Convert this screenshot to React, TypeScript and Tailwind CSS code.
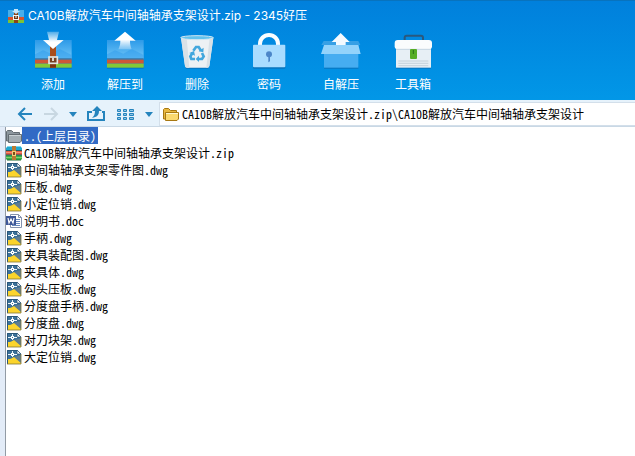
import { useState } from 'react';
import type { ReactNode } from 'react';

type FileKind = 'folder' | 'zip' | 'dwg' | 'doc';

interface FileEntry {
  name: string;
  kind: FileKind;
}

const archiveName = 'CA10B解放汽车中间轴轴承支架设计';

const files: FileEntry[] = [
  { name: '..(上层目录)', kind: 'folder' },
  { name: `${archiveName}.zip`, kind: 'zip' },
  { name: '中间轴轴承支架零件图.dwg', kind: 'dwg' },
  { name: '压板.dwg', kind: 'dwg' },
  { name: '小定位销.dwg', kind: 'dwg' },
  { name: '说明书.doc', kind: 'doc' },
  { name: '手柄.dwg', kind: 'dwg' },
  { name: '夹具装配图.dwg', kind: 'dwg' },
  { name: '夹具体.dwg', kind: 'dwg' },
  { name: '勾头压板.dwg', kind: 'dwg' },
  { name: '分度盘手柄.dwg', kind: 'dwg' },
  { name: '分度盘.dwg', kind: 'dwg' },
  { name: '对刀块架.dwg', kind: 'dwg' },
  { name: '大定位销.dwg', kind: 'dwg' },
];

// Toolbar drawings share one 120x114 canvas
function ToolIcon({ children }: { children: ReactNode }) {
  return (
    <svg viewBox="0 0 120 114" className="h-[38px] w-10" aria-hidden="true">
      {children}
    </svg>
  );
}

// The striped box used by "add" and "extract"
function StripedBox() {
  return (
    <>
      <rect x="6" y="108" width="110" height="5" fill="#0874bd" />
      <rect x="6" y="27" width="110" height="58" fill="url(#boxSky)" />
      <path d="M6 70 30 58 55 68 80 54 116 72V85H6z" fill="#2f9ceb" opacity=".5" />
      <rect x="6" y="82" width="110" height="4" fill="#386f9c" />
      <rect x="6" y="86" width="110" height="12" fill="#cf5637" />
      <rect x="6" y="98" width="110" height="12" fill="#83c936" />
    </>
  );
}

function AddIcon() {
  return (
    <ToolIcon>
      <StripedBox />
      <rect x="51" y="40" width="18" height="70" fill="#a94d1c" />
      <path d="M51 87h18v23H51z" fill="#80340f" />
      <rect x="48" y="78" width="25" height="19" fill="#77401f" stroke="#e3e6e5" strokeWidth="5" />
      <path d="M60 80v10" stroke="#f5f5f5" strokeWidth="5" />
      <path d="M42 2h36l-6 25h20L60 54 30 27h18z" fill="url(#arrowDown)" />
    </ToolIcon>
  );
}

function ExtractIcon() {
  return (
    <ToolIcon>
      <StripedBox />
      <path d="M60 2 92 29H75c0 12 2 18 5 26H40c4-8 6-14 6-26H28z" fill="url(#arrowUp)" />
    </ToolIcon>
  );
}

function DeleteIcon() {
  return (
    <ToolIcon>
      <path d="M24 107h72l-3 6H27z" fill="#0873bc" />
      <path d="M12 20h97l-12 85q-1 5-6 5H30q-5 0-6-5z" fill="#edf1f4" />
      <path d="M12 20h17l8 90h-7q-5 0-6-5zM109 20H98l-10 90h3q5 0 6-5z" fill="#d9e1e7" />
      <ellipse cx="60" cy="20" rx="49" ry="6" fill="#63c3ee" stroke="#d3e7f2" strokeWidth="3" />
      <g fill="none" stroke="#42a7dd" strokeWidth="8">
        <path d="m49 59 8-11h8l7 11" />
        <path d="m75 66 5 10-5 8H63" />
        <path d="M54 84H43l-3-8 7-11" />
      </g>
      <g fill="#42a7dd">
        <path d="m65 61 14 3 1-14z" />
        <path d="m66 74-10 10 10 9z" />
        <path d="m37 66 14-6 3 14z" />
      </g>
    </ToolIcon>
  );
}

function PasswordIcon() {
  return (
    <ToolIcon>
      <path d="M33 44V38a27 26 0 0 1 54 0v6" fill="none" stroke="#fafdff" strokeWidth="12" />
      <rect x="12" y="43" width="97" height="70" rx="3" fill="#0874bd" />
      <rect x="12" y="41" width="97" height="68" rx="3" fill="#a9dcff" />
      <circle cx="60" cy="70" r="9" fill="#4c86c9" />
      <path d="M58 72h5v19l-5 3z" fill="#4c86c9" />
    </ToolIcon>
  );
}

function SelfExtractIcon() {
  return (
    <ToolIcon>
      <path d="M8 30h104l6 12H1z" fill="#4faae7" opacity=".7" />
      <path d="M59 6 86 33H74v13H45V33H32z" fill="#f4faff" />
      <rect x="9" y="106" width="103" height="7" fill="#0874bd" />
      <rect x="9" y="42" width="103" height="68" fill="#46adf1" />
      <path d="M9 42h103l7 27H0z" fill="#93d3fb" />
    </ToolIcon>
  );
}

function ToolboxIcon() {
  return (
    <ToolIcon>
      <path d="M35 30V20q0-6 6-6h43q6 0 6 6v10" fill="none" stroke="#2b587d" strokeWidth="6" />
      <rect x="9" y="106" width="105" height="7" fill="#0874bd" />
      <rect x="9" y="50" width="105" height="60" fill="#e7eff5" />
      <rect x="5" y="27" width="112" height="28" rx="9" fill="#fafcfd" />
      <path d="M9 55h105" stroke="#c4d5e1" strokeWidth="3" />
      <path d="M16 90h90M16 97h90M16 104h90" stroke="#b4c2cd" strokeWidth="2" />
      <rect x="51" y="54" width="21" height="30" rx="3" fill="#55ad27" />
      <path d="M61 57v12" stroke="#27701a" strokeWidth="3" />
    </ToolIcon>
  );
}

// Small striped box in the title bar
function AppIcon() {
  return (
    <svg viewBox="0 0 16 16" className="size-4" aria-hidden="true">
      <rect y="2" width="16" height="8" fill="#48aeea" />
      <rect y="9" width="16" height="3" fill="#d9532c" />
      <rect y="12" width="16" height="3" fill="#7fc236" />
      <rect x="6" y="3" width="4" height="12" fill="#8d4318" />
      <path d="M6 1h4v2h2L8 6 4 3h2z" fill="#c5e6fa" />
      <rect x="5.500" y="7.500" width="5" height="4" fill="#6b3515" stroke="#f4f4f4" />
      <path d="M8 8v2" stroke="#fff" />
    </svg>
  );
}

function ArchiveIcon() {
  return (
    <svg viewBox="0 0 16 16" className="size-4" aria-hidden="true">
      <path d="M2 1h12l2 2v3H0V3z" fill="#20a7cf" />
      <path d="M2 1h12l1 1H1z" fill="#7bd8ee" />
      <rect y="6" width="16" height="4" fill="#e25a41" />
      <path d="M0 10h16v4l-1 1H1l-1-1z" fill="#3cae48" />
      <path d="M0 5.500h16M0 10h16" stroke="#1d5c66" />
      <path d="M0 7.500h16" stroke="#f58e72" />
      <path d="M0 12.500h16" stroke="#80d36e" />
      <path d="M1 15h14" stroke="#1e6b35" />
      <rect x="6" y="1" width="4" height="14" fill="#b97a32" />
      <rect x="6.500" y="6.500" width="3" height="4" fill="#7b4a1b" stroke="#f0d27a" />
    </svg>
  );
}

function FolderIcon({ gray }: { gray?: boolean }) {
  const line = gray ? '#636b71' : '#a77812';
  return (
    <svg viewBox="0 0 16 16" className="size-4" aria-hidden="true">
      <path d="M.5 13V3.500l1-1h4l2 2h6V13z" fill={gray ? '#8c969d' : '#e9b840'} stroke={line} />
      <path d="M2.500 14.500v-8h13V13l-1.500 1.500z" fill={gray ? '#a4adb2' : '#fbd96f'} stroke={line} />
      <path d="M3 7.500h12" stroke={gray ? '#c9d0d4' : '#fff8cf'} />
    </svg>
  );
}

function DwgIcon() {
  return (
    <svg viewBox="0 0 16 16" className="size-4" aria-hidden="true">
      <path d="M1 1h10l4 4v10H1z" fill="#3c7199" />
      <path d="M8 8 15 6v8z" fill="#5f7c91" />
      <path d="M1 10c3 .3 5-.5 7-2l7 6v1H1z" fill="#fbd42c" />
      <path d="M2 5.500h3M8 5.500h3M6.500 2v2M6.500 7v1" stroke="#eaf3f8" />
      <rect x="5.500" y="4.500" width="2" height="2" fill="#3c7199" stroke="#fff" />
      <path d="M11 1v4h4z" fill="#fff" stroke="#2c5678" strokeWidth=".8" />
      <path d="M1.500 15V1.500H11" fill="none" stroke="#28567a" />
      <path d="M1 15h14V5" fill="none" stroke="#847636" strokeWidth=".8" />
    </svg>
  );
}

function DocIcon() {
  return (
    <svg viewBox="0 0 16 16" className="size-4" aria-hidden="true">
      <path d="M4.500 1.500h8l3 3v10h-11z" fill="#fff" stroke="#8492ad" />
      <path d="M10 6.500h4M10 8.500h4M10 10.500h4M6 12.500h8" stroke="#6687bd" />
      <path d="M12.500 1.500v3h3" fill="none" stroke="#8492ad" />
      <rect x="0" y="3" width="10" height="9" fill="#3d5797" />
      <path d="m2 5 1 5 2-4 2 4 1-5" fill="none" stroke="#fff" strokeWidth="1.200" />
    </svg>
  );
}

function FileIcon({ kind }: { kind: FileKind }) {
  if (kind === 'folder') return <FolderIcon gray />;
  if (kind === 'zip') return <ArchiveIcon />;
  if (kind === 'doc') return <DocIcon />;
  return <DwgIcon />;
}

function Caret() {
  return (
    <svg viewBox="0 0 8 5" className="h-[5px] w-2" aria-hidden="true">
      <path d="M0 0h8L4 5z" fill="#2484bd" />
    </svg>
  );
}

const tools = [
  { label: '添加', icon: <AddIcon /> },
  { label: '解压到', icon: <ExtractIcon /> },
  { label: '删除', icon: <DeleteIcon /> },
  { label: '密码', icon: <PasswordIcon /> },
  { label: '自解压', icon: <SelfExtractIcon /> },
  { label: '工具箱', icon: <ToolboxIcon /> },
];

export default function App() {
  const [selected, setSelected] = useState(0);
  const [path, setPath] = useState(`${archiveName}.zip\\${archiveName}`);

  return (
    <div className="flex min-h-screen flex-col bg-white font-['Noto_Sans_CJK_SC',sans-serif] text-xs text-black">
      {/* Shared gradients */}
      <svg className="absolute size-0" aria-hidden="true">
        <defs>
          <linearGradient id="boxSky" x2="0" y2="1">
            <stop stopColor="#2d9ae8" />
            <stop offset="1" stopColor="#70c6f8" />
          </linearGradient>
          <linearGradient id="arrowDown" x2="0" y2="1">
            <stop stopColor="#fff" stopOpacity=".3" />
            <stop offset=".6" stopColor="#fff" />
          </linearGradient>
          <linearGradient id="arrowUp" x2="0" y2="1">
            <stop offset=".45" stopColor="#fff" />
            <stop offset="1" stopColor="#fff" stopOpacity=".25" />
          </linearGradient>
        </defs>
      </svg>

      {/* Title bar and main toolbar */}
      <header className="border-t border-[#0873be] bg-linear-to-b from-[#0180dc] to-[#0297e7] pb-[6px] text-white">
        <div className="flex h-[30px] items-center gap-1 pl-2">
          <AppIcon />
          <h1 className="font-[Inter,'Noto_Sans_CJK_SC',sans-serif]">{archiveName}.zip - 2345好压</h1>
        </div>
        <div className="flex pl-[17px]">
          {tools.map((tool) => (
            <button key={tool.label} className="flex w-[72px] flex-col items-center gap-[5px]">
              {tool.icon}
              <span className="leading-5">{tool.label}</span>
            </button>
          ))}
        </div>
      </header>

      {/* Navigation bar */}
      <nav className="flex h-[27px] items-center border-b border-[#c9d8e5] bg-[#e6f2fb] pt-[2px]">
        <div className="flex w-[159px] shrink-0 items-center pl-[17px]">
          <button aria-label="后退" className="w-[26px]">
            <svg viewBox="0 0 16 14" className="h-[14px] w-4" fill="none" stroke="#2484bd" strokeWidth="2">
              <path d="M15 7H2M8 1 2 7l6 6" />
            </svg>
          </button>
          <button aria-label="前进" className="w-[26px]">
            <svg viewBox="0 0 16 14" className="h-[14px] w-4" fill="none" stroke="#c8d7e1" strokeWidth="2">
              <path d="M1 7h13M8 1l6 6-6 6" />
            </svg>
          </button>
          <button aria-label="历史记录" className="w-[17px]">
            <Caret />
          </button>
          <button aria-label="向上" className="w-[30px]">
            <svg viewBox="0 0 20 16" className="h-4 w-5">
              <path d="M6 6H2v8h16V6h-2" fill="none" stroke="#2484bd" strokeWidth="2" />
              <path d="M11 0l5 5h-3c0 4-2 6-7 7 2-2 3-4 3-7H6z" fill="#2484bd" />
            </svg>
          </button>
          <button aria-label="视图" className="w-[29px]">
            <svg viewBox="0 0 19 13" className="h-[13px] w-[19px]">
              <g fill="#8fc3e3" stroke="#2484bd">
                <path d="M1.500 1.500h3v2h-3zM1.500 5.500h3v2h-3zM1.500 9.500h3v2h-3z" />
                <path d="M7.500 1.500h3v2h-3zM7.500 5.500h3v2h-3zM7.500 9.500h3v2h-3z" />
                <path d="M13.500 1.500h4v2h-4zM13.500 5.500h4v2h-4zM13.500 9.500h4v2h-4z" />
              </g>
            </svg>
          </button>
          <button aria-label="视图选项">
            <Caret />
          </button>
        </div>
        <label className="flex h-6 flex-1 items-center gap-[3px] border border-r-0 border-[#d3dfea] bg-white pl-[3px]">
          <FolderIcon />
          <input
            aria-label="路径"
            value={path}
            onChange={(e) => setPath(e.target.value)}
            className="min-w-0 flex-1 outline-none [font-feature-settings:'hwid']"
          />
        </label>
      </nav>

      {/* File list */}
      <main className="flex flex-1 bg-[#e3ecf8] pl-[5px]">
        <ul className="flex-1 border-l border-[#929ba5] bg-white">
          {files.map((file, i) => (
            <li key={file.name}>
              <button onClick={() => setSelected(i)} className="flex h-[17px] items-center">
                <FileIcon kind={file.kind} />
                <span
                  className={`h-[17px] px-[2px] leading-[17px] [font-feature-settings:'hwid'] ${
                    selected === i ? 'bg-[#316ac5] text-white' : ''
                  }`}
                >
                  {file.name}
                </span>
              </button>
            </li>
          ))}
        </ul>
      </main>
    </div>
  );
}
